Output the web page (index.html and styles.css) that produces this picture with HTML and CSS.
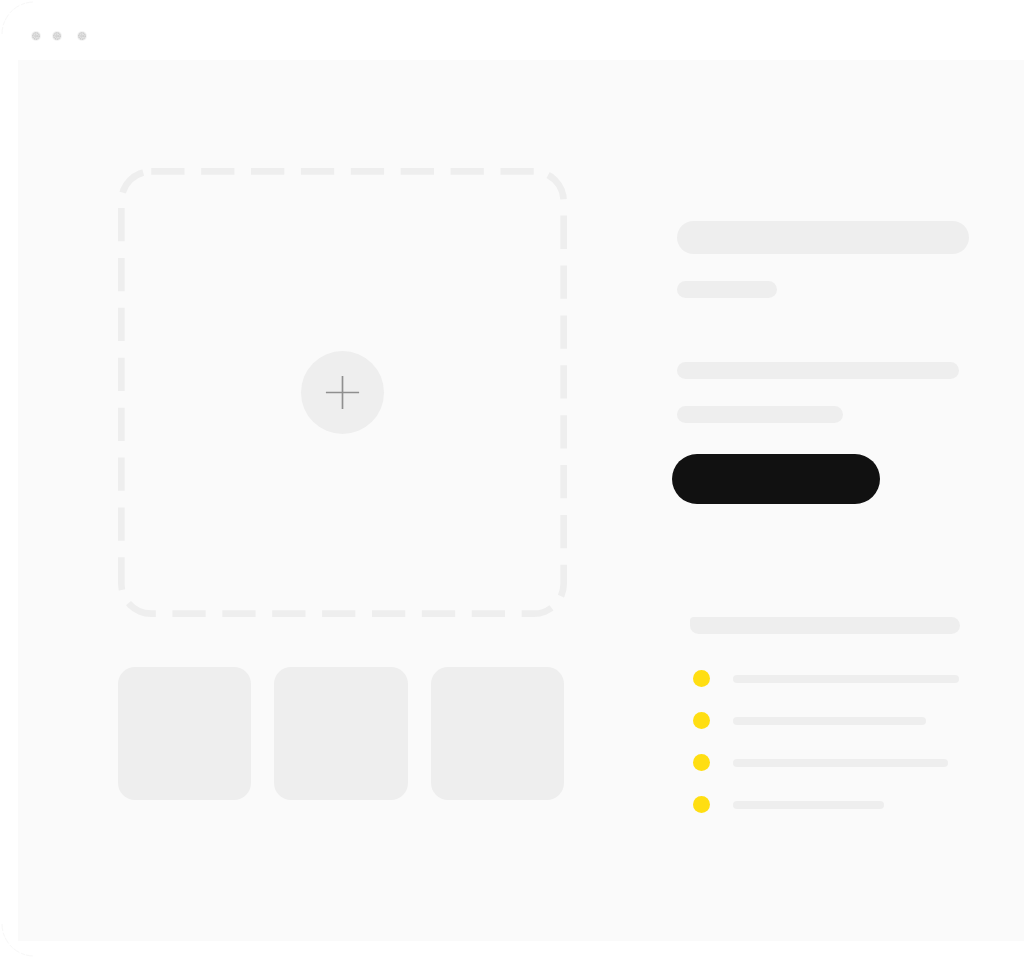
FILE: index.html
```
<!DOCTYPE html>
<html lang="en">
<head>
<meta charset="utf-8">
<meta name="viewport" content="width=device-width, initial-scale=1">
<title>Product page wireframe</title>
<link rel="stylesheet" href="styles.css">
</head>
<body>
<div class="window">
  <svg class="corner corner-top" viewBox="0 0 36 36" aria-hidden="true"><path d="M2 34A32 32 0 0 1 34 2"/></svg>
  <svg class="corner corner-bottom" viewBox="0 0 36 36" aria-hidden="true"><path d="M2 2A32 32 0 0 0 34 34"/></svg>
  <header class="titlebar">
    <svg class="lights" viewBox="0 0 60 12" aria-hidden="true">
      <defs>
        <g id="light">
          <circle class="light-halo" r="5"/>
          <circle class="light-base" r="4"/>
          <circle class="light-grain" r="3.2"/>
          <circle class="light-grain" r="1.2"/>
        </g>
      </defs>
      <use href="#light" x="6" y="6"/>
      <use href="#light" x="27" y="6"/>
      <use href="#light" x="52" y="6"/>
    </svg>
  </header>
  <main class="canvas">
    <section class="gallery">
      <div class="dropzone">
        <svg class="outline" viewBox="0 0 270 270" aria-hidden="true">
          <clipPath id="inside"><rect width="270" height="270" rx="20"/></clipPath>
          <rect class="dashes" width="270" height="270" rx="20" clip-path="url(#inside)"/>
        </svg>
        <button class="add" type="button" aria-label="Add image">
          <svg viewBox="0 0 50 50" aria-hidden="true"><path d="M25 15V35M15 25H35"/></svg>
        </button>
      </div>
      <div class="thumbs">
        <div class="thumb"></div>
        <div class="thumb"></div>
        <div class="thumb"></div>
      </div>
    </section>
    <section class="details">
      <div class="bar title"></div>
      <div class="bar price"></div>
      <div class="bar text-long"></div>
      <div class="bar text-short"></div>
      <button class="buy" type="button" aria-label="Buy"></button>
      <div class="bar heading"></div>
      <ul class="features">
        <li><span class="dot"></span><span class="line line-a"></span></li>
        <li><span class="dot"></span><span class="line line-b"></span></li>
        <li><span class="dot"></span><span class="line line-c"></span></li>
        <li><span class="dot"></span><span class="line line-d"></span></li>
      </ul>
    </section>
  </main>
</div>
</body>
</html>
```
FILE: styles.css
```
* { box-sizing: border-box; }

body {
  margin: 0;
  background: #fff;
  font-family: "Liberation Sans", sans-serif;
}

.window {
  position: relative;
  padding: 0 0 17px 18px;
}

.corner {
  position: absolute;
  left: 0;
  width: 36px;
  height: 36px;
  fill: none;
  stroke: #f7f7f7;
  stroke-width: 1;
  stroke-dasharray: 7 2 4 1;
}
.corner-top { top: 0; }
.corner-bottom { bottom: 0; }

.titlebar {
  height: 60px;
  padding: 30px 12px 0;
}
.lights {
  display: block;
  width: 60px;
  height: 12px;
}
.light-halo { fill: #f4f4f4; }
.light-base { fill: #e2e2e2; }
.light-grain {
  fill: none;
  stroke: #bcbcbc;
  stroke-width: 1;
  stroke-dasharray: 1 1;
}

.canvas {
  display: grid;
  grid-template-columns: minmax(0, 449px) minmax(0, 298px);
  column-gap: 105px;
  align-items: start;
  padding: 108px 0 128px 100px;
  background: #fafafa;
}

.dropzone {
  display: grid;
  place-items: center;
}
.outline {
  grid-area: 1 / 1;
  display: block;
  width: 100%;
}
.dashes {
  fill: none;
  stroke: #eee;
  stroke-width: 8;
  stroke-dasharray: 20 10;
}
.add {
  grid-area: 1 / 1;
  width: 83px;
  height: 83px;
  padding: 0;
  border: 0;
  border-radius: 50%;
  background: #eee;
  cursor: pointer;
}
.add svg {
  display: block;
  width: 100%;
  fill: none;
  stroke: #8f8f8f;
  stroke-width: 1;
}

.thumbs {
  display: grid;
  grid-template-columns: repeat(3, 1fr);
  gap: 23px;
  margin-top: 50px;
  padding-right: 3px;
}
.thumb {
  height: 133px;
  border-radius: 17px;
  background: #eee;
}

.details {
  display: flex;
  flex-direction: column;
  align-items: flex-start;
  padding-top: 53px;
}
.bar {
  max-width: 100%;
  height: 17px;
  margin-left: 5px;
  border-radius: 9px;
  background: #eee;
}
.title {
  width: 292px;
  height: 33px;
  border-radius: 17px;
}
.price { width: 100px; margin-top: 27px; }
.text-long { width: 282px; margin-top: 64px; }
.text-short { width: 166px; margin-top: 27px; }
.buy {
  width: 208px;
  max-width: 100%;
  height: 50px;
  margin-top: 31px;
  padding: 0;
  border: 0;
  border-radius: 25px;
  background: #111;
  cursor: pointer;
}
.heading {
  width: 270px;
  margin-top: 113px;
  margin-left: 18px;
  border-top-left-radius: 4px;
}

.features {
  display: flex;
  flex-direction: column;
  gap: 25px;
  width: 100%;
  margin: 36px 0 0;
  padding: 0 0 0 21px;
  list-style: none;
}
.features li {
  display: flex;
  gap: 23px;
  height: 17px;
}
.dot {
  flex: none;
  width: 17px;
  height: 17px;
  border-radius: 50%;
  background: #ffde12;
}
.line {
  height: 8px;
  margin-top: 5px;
  border-radius: 4px;
  background: #eee;
}
.line-a { width: 226px; }
.line-b { width: 193px; }
.line-c { width: 215px; }
.line-d { width: 151px; }
```
